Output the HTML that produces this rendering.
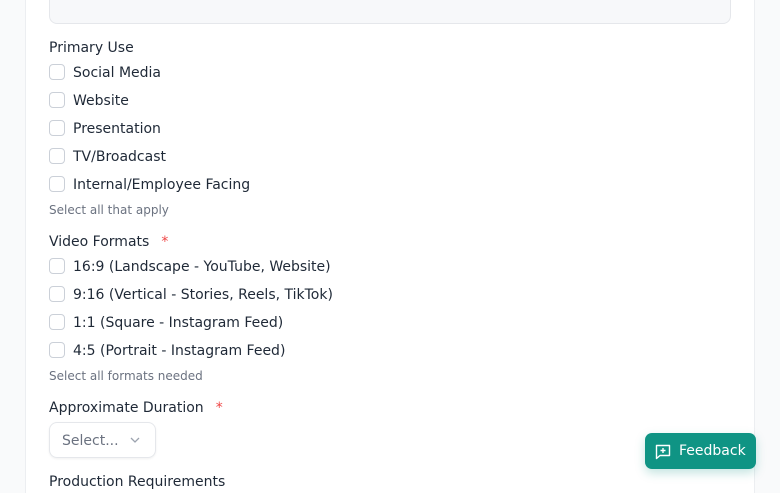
<!DOCTYPE html>
<html><head><meta charset="utf-8"><style>
*{box-sizing:border-box;margin:0;padding:0}
html,body{width:780px;height:493px;overflow:hidden}
body{background:#f9fafb;font-family:"DejaVu Sans","Liberation Sans",sans-serif;color:#1f2937;position:relative}
.card{position:absolute;left:25px;top:0;width:730px;height:493px;background:#fff;border-left:1px solid #eceef1;border-right:1px solid #eceef1}
.ta{position:absolute;left:49px;top:-20px;width:682px;height:44px;background:#f7f8fa;border:1px solid #e5e7eb;border-radius:8px}
.lbl{position:absolute;left:49px;font-size:14px;line-height:16px}
.req{color:#ef4444;margin-left:12px}
.cb{position:absolute;left:49px;width:16px;height:16px;border:1px solid #cbd0d8;border-radius:4px;background:#fff}
.ct{position:absolute;left:73px;font-size:14px;line-height:16px}
.help{position:absolute;left:49px;font-size:12px;color:#6b7280;line-height:14px}
.sel{position:absolute;left:49px;top:422px;width:107px;height:36px;border:1px solid #e5e7eb;border-radius:8px;box-shadow:0 1px 2px rgba(0,0,0,.06);font-size:14px;color:#6b7280;padding:10px 0 0 12px}
.fb{position:absolute;left:645px;top:433px;width:111px;height:36px;background:#0f9484;border-radius:7px;color:#fff;font-size:14px;box-shadow:0 4px 10px rgba(15,148,132,.25)}
</style></head><body>
<div class="card"></div>
<div class="ta"></div>
<div class="lbl" style="top:40px">Primary Use</div>
<div class="cb" style="top:64px"></div><div class="ct" style="top:65px">Social Media</div>
<div class="cb" style="top:92px"></div><div class="ct" style="top:93px">Website</div>
<div class="cb" style="top:120px"></div><div class="ct" style="top:121px">Presentation</div>
<div class="cb" style="top:148px"></div><div class="ct" style="top:149px">TV/Broadcast</div>
<div class="cb" style="top:176px"></div><div class="ct" style="top:177px">Internal/Employee Facing</div>
<div class="help" style="top:203px">Select all that apply</div>
<div class="lbl" style="top:234px">Video Formats<span class="req">*</span></div>
<div class="cb" style="top:258px"></div><div class="ct" style="top:259px">16:9 (Landscape - YouTube, Website)</div>
<div class="cb" style="top:286px"></div><div class="ct" style="top:287px">9:16 (Vertical - Stories, Reels, TikTok)</div>
<div class="cb" style="top:314px"></div><div class="ct" style="top:315px">1:1 (Square - Instagram Feed)</div>
<div class="cb" style="top:342px"></div><div class="ct" style="top:343px">4:5 (Portrait - Instagram Feed)</div>
<div class="help" style="top:369px">Select all formats needed</div>
<div class="lbl" style="top:400px">Approximate Duration<span class="req">*</span></div>
<div class="sel">Select...<svg style="position:absolute;left:80px;top:14px" width="10" height="6" viewBox="0 0 10 6"><path d="M1 1l4 4 4-4" fill="none" stroke="#9ca3af" stroke-width="1.3"/></svg></div>
<div class="lbl" style="top:474px">Production Requirements</div>
<div class="fb"><svg style="position:absolute;left:10px;top:10px" width="16" height="17" viewBox="0 0 16 17"><path d="M1.5 2.5h13v10H5l-3.5 3z" fill="none" stroke="#fff" stroke-width="1.4" stroke-linejoin="round"/><path d="M8 5v5M5.5 7.5h5" stroke="#fff" stroke-width="1.4"/></svg><span style="position:absolute;left:34px;top:10px">Feedback</span></div>
</body></html>
